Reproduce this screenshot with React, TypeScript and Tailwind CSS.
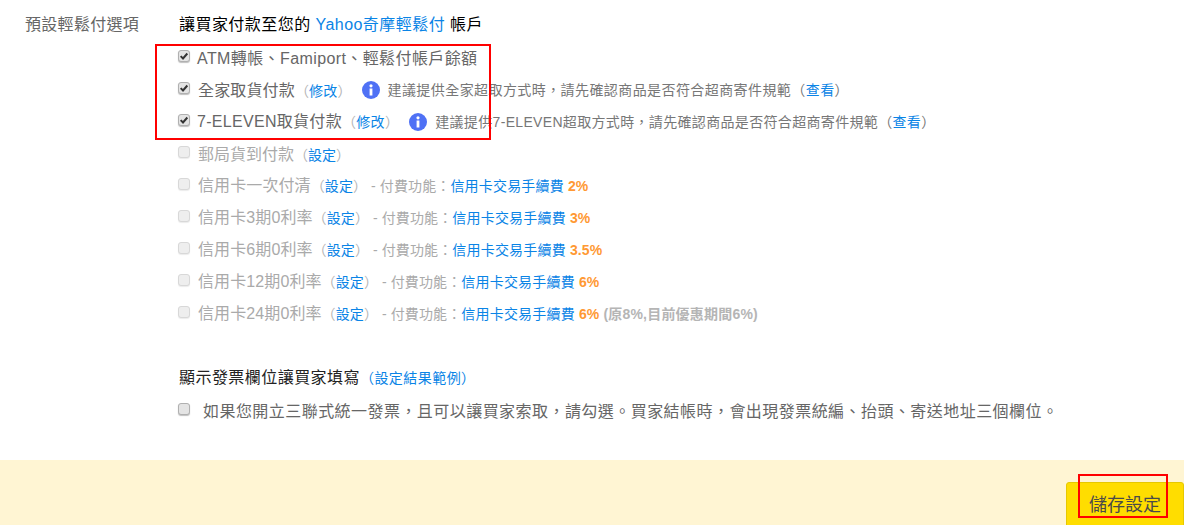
const linkClass = "text-sm tracking-[0.2px] text-[#0a84e6]";

function Checkbox({ checked = false, disabled = false }: { checked?: boolean; disabled?: boolean }) {
	return (
		<span
			className={
				disabled
					? "mb-[4px] flex h-3 w-3 shrink-0 items-center justify-center rounded-[3px] border border-[#d8d8d8] bg-[#eeeeee] shadow-[0_1px_1px_rgba(0,0,0,0.08)]"
					: "mb-[4px] flex h-3 w-3 shrink-0 items-center justify-center rounded-[3px] border border-[#b0b0b0] bg-[#e4e4e4] shadow-[0_1px_1px_rgba(0,0,0,0.25)]"
			}
		>
			{checked && (
				<svg viewBox="0 0 12 12" className="h-[10px] w-[10px]">
					<path d="M2 6.2 L4.8 9 L10 3" fill="none" stroke="#333" strokeWidth="2.4" />
				</svg>
			)}
		</span>
	);
}

function InfoIcon() {
	return (
		<svg viewBox="0 0 18 18" className="ml-[10px] h-[18px] w-[18px] shrink-0">
			<circle cx="9" cy="9" r="9" fill="#4f71f5" />
			<circle cx="9" cy="4.8" r="1.6" fill="#fff" />
			<rect x="7.6" y="7.5" width="2.8" height="7" fill="#fff" />
		</svg>
	);
}

function Paren({ children }: { children: string }) {
	return (
		<span className="text-sm text-[#b5b5b5]">
			（<span className="text-[#0a84e6]">{children}</span>）
		</span>
	);
}

function CardRow({ label, fee, extra }: { label: string; fee: string; extra?: string }) {
	return (
		<div className="flex h-8 items-center">
			<Checkbox disabled />
			<div className="ml-2 whitespace-nowrap tracking-[0.1px] text-[#aaa]">
				{label}
				<Paren>設定</Paren>
				<span className="text-sm"> - 付費功能：</span>
				<span className={linkClass}>信用卡交易手續費</span>
				<span className="text-sm font-bold text-[#ff9933]"> {fee}</span>
				{extra && <span className="text-sm font-bold tracking-[0.2px] text-[#b5b5b5]"> {extra}</span>}
			</div>
		</div>
	);
}

function Note({ children, what, spacing }: { children: string; what: string; spacing: string }) {
	return (
		<span className={`ml-2 whitespace-nowrap text-sm text-[#777] ${spacing}`}>
			{children}（<span className="text-[#0a84e6]">{what}</span>）
		</span>
	);
}

export default function App() {
	return (
		<div className="relative flex h-[525px] w-[1184px] flex-col overflow-hidden bg-white font-['Liberation_Sans','Noto_Sans_CJK_TC',sans-serif] text-base text-[#666]">
			<div className="flex h-[460px] pl-[25px]">
				<div className="mt-[13px] w-[153px] shrink-0 tracking-[0.3px] text-[#666]">預設輕鬆付選項</div>
				<div className="flex flex-col">
					<div className="mt-[13px] flex h-6 items-center whitespace-nowrap pl-px tracking-[0.45px] text-black">
						讓買家付款至您的&nbsp;<span className="text-[#0a84e6]">Yahoo奇摩輕鬆付</span>&nbsp;帳戶
					</div>
					<div className="mt-[5px] flex h-8 items-center">
						<Checkbox checked />
						<span className="ml-[7px] mt-[2px] whitespace-nowrap tracking-[0.4px]">ATM轉帳、Famiport、輕鬆付帳戶餘額</span>
					</div>
					<div className="flex h-8 items-center">
						<Checkbox checked />
						<span className="ml-2 mt-[2px] whitespace-nowrap tracking-[0.15px]">全家取貨付款<Paren>修改</Paren></span>
						<InfoIcon />
						<Note what="查看" spacing="tracking-[0.42px]">建議提供全家超取方式時，請先確認商品是否符合超商寄件規範</Note>
					</div>
					<div className="flex h-8 items-center">
						<Checkbox checked />
						<span className="ml-[7px] whitespace-nowrap tracking-[0.3px]">7-ELEVEN取貨付款<Paren>修改</Paren></span>
						<InfoIcon />
						<Note what="查看" spacing="tracking-[0.33px]">建議提供7-ELEVEN超取方式時，請先確認商品是否符合超商寄件規範</Note>
					</div>
					<div className="flex h-8 items-center">
						<Checkbox disabled />
						<span className="ml-2 mt-[2px] whitespace-nowrap text-[#aaa]">郵局貨到付款<Paren>設定</Paren></span>
					</div>
					<CardRow label="信用卡一次付清" fee="2%" />
					<CardRow label="信用卡3期0利率" fee="3%" />
					<CardRow label="信用卡6期0利率" fee="3.5%" />
					<CardRow label="信用卡12期0利率" fee="6%" />
					<CardRow label="信用卡24期0利率" fee="6%" extra="(原8%,目前優惠期間6%)" />
					<div className="mt-[36px] flex h-6 items-center whitespace-nowrap pl-px tracking-[0.45px] text-[#222]">
						顯示發票欄位讓買家填寫
						<span className="text-sm text-[#0a84e6]">（設定結果範例）</span>
					</div>
					<div className="mt-[9px] flex h-6 items-center">
						<Checkbox />
						<span className="ml-[13px] mt-[2px] whitespace-nowrap tracking-[0.45px]">
							如果您開立三聯式統一發票，且可以讓買家索取，請勾選。買家結帳時，會出現發票統編、抬頭、寄送地址三個欄位。
						</span>
					</div>
				</div>
			</div>

			<div className="flex h-[65px] justify-end bg-[#fff5d3]">
				<button className="mt-[22px] h-[50px] w-[118px] rounded-t-[3px] border border-[#e6c800] bg-[#ffdd00] pb-[4px] text-lg text-[#4a4a4a]">
					儲存設定
				</button>
			</div>

			{/* red annotation boxes drawn over the page */}
			<div className="absolute left-[155px] top-[44px] h-[96px] w-[336px] border-2 border-[#f00]" />
			<div className="absolute left-[1078px] top-[474px] h-[44px] w-[90px] border-2 border-[#f00]" />
		</div>
	);
}
